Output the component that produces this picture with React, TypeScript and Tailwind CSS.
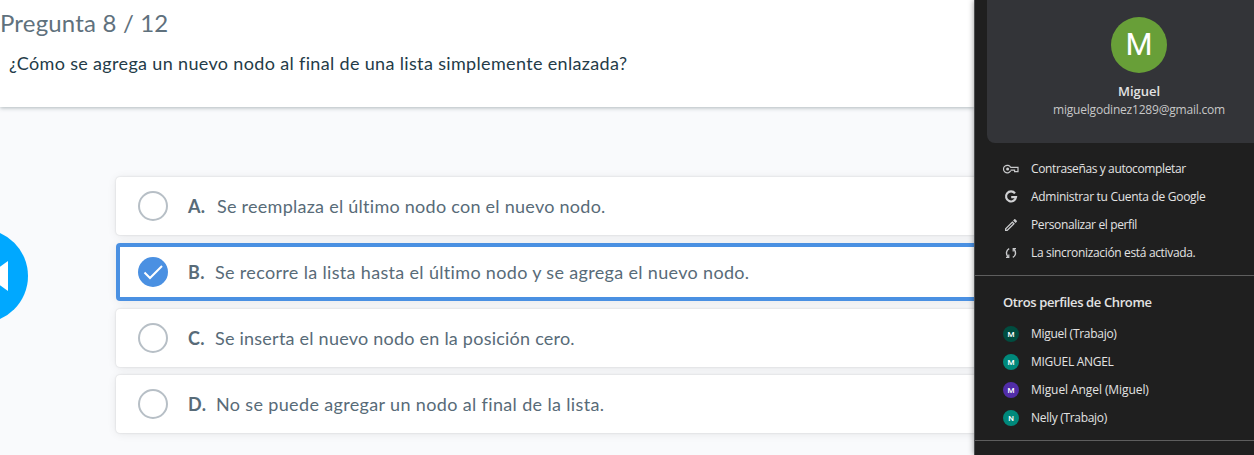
import React from "react";
import { MdOutlineEdit } from "react-icons/md";

type Answer = { letter: string; text: string; track: string; checked?: boolean };

const answers: Answer[] = [
  { letter: "A.", text: "Se reemplaza el último nodo con el nuevo nodo.", track: "tracking-[0.26px] ml-[11px]" },
  { letter: "B.", text: "Se recorre la lista hasta el último nodo y se agrega el nuevo nodo.", track: "tracking-[0.33px] ml-[9px]", checked: true },
  { letter: "C.", text: "Se inserta el nuevo nodo en la posición cero.", track: "tracking-[0.23px] ml-[9px]" },
  { letter: "D.", text: "No se puede agregar un nodo al final de la lista.", track: "tracking-[0.35px] ml-[10px]" },
];

function AnswerRow({ letter, text, track, checked }: Answer) {
  return (
    <div
      className={
        "flex h-[58px] items-center rounded bg-white pl-[22px] text-[18px] whitespace-nowrap text-[#586b78] " +
        (checked
          ? "shadow-[inset_0_0_0_4px_#4a90e2,0_1px_10px_rgba(0,0,0,0.08)]"
          : "shadow-[0_0_2px_rgba(0,0,0,0.16),0_1px_10px_rgba(0,0,0,0.08)]")
      }
    >
      {checked ? (
        <svg className="h-[30px] w-[30px] shrink-0" viewBox="0 0 30 30" fill="none">
          <circle cx="15" cy="15" r="15" fill="#4a90e2" />
          <path d="M6.5 15.5 12 21 24 9" stroke="#fff" strokeWidth="2" />
        </svg>
      ) : (
        <span className="h-[30px] w-[30px] shrink-0 rounded-full border-2 border-[#b7bfc6]" />
      )}
      <span className="ml-5 w-[18px] shrink-0 font-bold tracking-[0.3px]">{letter}</span>
      <span className={track}>{text}</span>
    </div>
  );
}

function KeyIcon() {
  return (
    <svg className="h-4 w-4" viewBox="0 0 16 16" fill="none" stroke="#c9cacc" strokeWidth="1.2">
      <path d="M7.7 6.4A3.8 3.8 0 1 0 7.7 9.8" />
      <path d="M7.4 6.4H15v4.3h-3.4V9.2H7.6" />
      <circle cx="4.6" cy="8.1" r="1.5" fill="#c9cacc" stroke="none" />
    </svg>
  );
}

function GoogleIcon() {
  return (
    <svg className="h-4 w-4" viewBox="0 0 16 16" fill="none" stroke="#d0d1d3" strokeWidth="2.2">
      <path d="M12 4.4A5 5 0 1 0 13 8.2H8.2" />
    </svg>
  );
}

function SyncIcon() {
  return (
    <svg className="h-4 w-4" viewBox="0 0 16 16" fill="none" stroke="#c9cacc" strokeWidth="1.4">
      <path d="M6.2 3.6C3.2 5 2.5 9 5.2 12" />
      <path d="M9.8 12.4C12.8 11 13.5 7 10.8 4" />
      <path d="M3 12.4h2.8V9.6M13 3.6h-2.8v2.8" strokeWidth="1.2" />
    </svg>
  );
}

const actions = [
  { icon: <KeyIcon />, text: "Contraseñas y autocompletar", track: "tracking-[-0.38px]" },
  { icon: <GoogleIcon />, text: "Administrar tu Cuenta de Google", track: "tracking-[-0.29px]" },
  { icon: <MdOutlineEdit size={16} color="#c9cacc" />, text: "Personalizar el perfil", track: "tracking-[-0.37px]" },
  { icon: <SyncIcon />, text: "La sincronización está activada.", track: "tracking-[-0.34px]" },
];

const profiles = [
  { initial: "M", name: "Miguel (Trabajo)", color: "bg-[#004d40]", track: "tracking-[-0.28px]" },
  { initial: "M", name: "MIGUEL ANGEL", color: "bg-[#00897b]", track: "tracking-[-0.28px]" },
  { initial: "M", name: "Miguel Angel (Miguel)", color: "bg-[#512da8]", track: "tracking-[-0.08px]" },
  { initial: "N", name: "Nelly (Trabajo)", color: "bg-[#00897b]", track: "tracking-[-0.3px]" },
];

export default function App() {
  return (
    <div className="flex h-[455px] w-full overflow-hidden bg-[#f9fafc]">
      <main className="relative w-[974px] shrink-0 overflow-hidden font-['Lato',sans-serif]">
        <header className="h-[107px] bg-white shadow-[0_1px_4px_rgba(38,60,70,0.35)]">
          <h1 className="pt-[7px] text-[24px] leading-8 tracking-[0.18px] text-[#5f717d]">Pregunta 8 / 12</h1>
          <p className="mt-3 pl-[9px] text-[18px] leading-6 tracking-[0.34px] text-[#243b48]">
            ¿Cómo se agrega un nuevo nodo al final de una lista simplemente enlazada?
          </p>
        </header>
        <section className="-mr-5 ml-[116px] mt-[70px] flex flex-col gap-2">
          {answers.map((a) => (
            <AnswerRow key={a.letter} {...a} />
          ))}
        </section>
        <button className="absolute top-[229px] left-[-66px] h-[94px] w-[94px] rounded-full bg-[#00a8ff]" aria-label="Anterior">
          <svg className="h-full w-full" viewBox="0 0 94 94" fill="#fff">
            <path d="M74 32v30L53 47z" />
          </svg>
        </button>
      </main>
      <aside className="relative w-[280px] shrink-0 overflow-hidden border-l border-[#4b4d4f] bg-[#1f1f1f] font-['Open_Sans','Noto_Sans',sans-serif] text-[12px] text-[#e3e3e3] shadow-[0_0_6px_rgba(0,0,0,0.4)]">
        <div className="ml-3 flex h-[143px] w-[304px] flex-col items-center rounded-b-lg bg-[#333438] pt-[17px]">
          <div className="flex h-14 w-14 items-center justify-center rounded-full bg-[#689f38] pt-px font-['Roboto',sans-serif] text-[31px] text-white">
            M
          </div>
          <div className="mt-[9px] text-[13px] leading-[18px] font-semibold">Miguel</div>
          <div className="mt-px text-[12px] leading-[18px] tracking-[-0.2px] text-[#c7c7c7]">miguelgodinez1289@gmail.com</div>
        </div>
        <ul className="mt-3 pl-7">
          {actions.map((a) => (
            <li key={a.text} className="flex h-7 items-center gap-3 whitespace-nowrap">
              {a.icon}
              <span className={a.track}>{a.text}</span>
            </li>
          ))}
        </ul>
        <div className="mt-2 border-t border-[#5e5e5e]" />
        <h2 className="mt-4 pl-7 text-[13px] leading-5 font-semibold tracking-[-0.39px]">Otros perfiles de Chrome</h2>
        <ul className="mt-2 pl-7">
          {profiles.map((p) => (
            <li key={p.name} className="flex h-7 items-center gap-3 whitespace-nowrap">
              <span className={"flex h-4 w-4 items-center justify-center rounded-full pt-px font-['Roboto',sans-serif] text-[8px] font-medium text-white " + p.color}>
                {p.initial}
              </span>
              <span className={p.track}>{p.name}</span>
            </li>
          ))}
        </ul>
        <div className="mt-2 border-t border-[#5e5e5e]" />
      </aside>
    </div>
  );
}
